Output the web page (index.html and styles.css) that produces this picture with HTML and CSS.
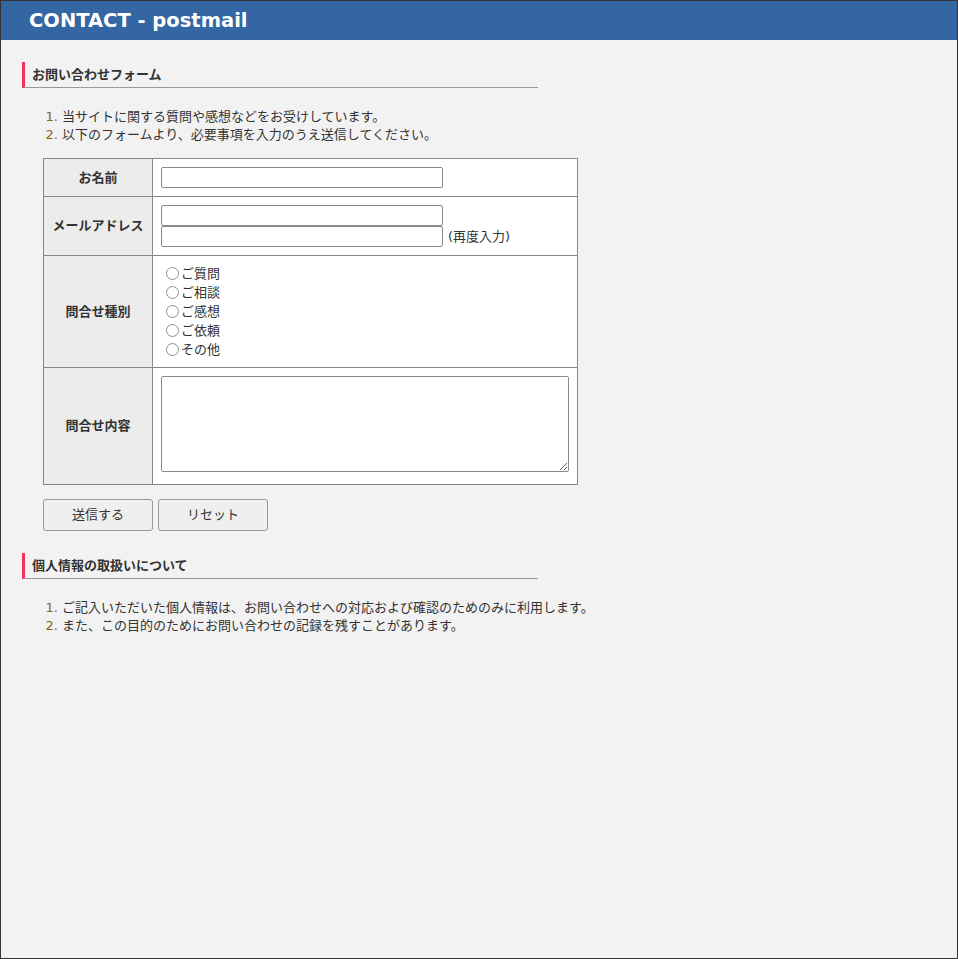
FILE: index.html
```html
<!DOCTYPE html>
<html lang="ja">
<head>
  <meta charset="UTF-8" />
  <title>CONTACT - postmail</title>
  <link rel="stylesheet" href="styles.css">
</head>
<body>
  <div class="header">
    <h1>CONTACT - postmail</h1>
  </div>

  <div class="content">
    <h2 class="heading">お問い合わせフォーム</h2>
    <ol class="notes">
      <li>当サイトに関する質問や感想などをお受けしています。</li>
      <li>以下のフォームより、必要事項を入力のうえ送信してください。</li>
    </ol>

    <form class="mail-form" action="#" method="post">
      <table class="form-table">
        <tr>
          <th>お名前</th>
          <td><input type="text" name="name" class="text-field"></td>
        </tr>
        <tr>
          <th>メールアドレス</th>
          <td>
            <input type="text" name="email" class="text-field block-field">
            <div class="field-row">
              <input type="text" name="email2" class="text-field">
              <span class="hint">(再度入力)</span>
            </div>
          </td>
        </tr>
        <tr>
          <th>問合せ種別</th>
          <td class="radio-cell">
            <label class="radio-item"><input type="radio" name="kind" value="1">ご質問</label>
            <label class="radio-item"><input type="radio" name="kind" value="2">ご相談</label>
            <label class="radio-item"><input type="radio" name="kind" value="3">ご感想</label>
            <label class="radio-item"><input type="radio" name="kind" value="4">ご依頼</label>
            <label class="radio-item"><input type="radio" name="kind" value="5">その他</label>
          </td>
        </tr>
        <tr>
          <th>問合せ内容</th>
          <td class="memo-cell"><textarea name="memo" class="memo"></textarea></td>
        </tr>
      </table>

      <div class="buttons">
        <button type="submit" class="btn">送信する</button>
        <button type="reset" class="btn">リセット</button>
      </div>
    </form>

    <h2 class="heading">個人情報の取扱いについて</h2>
    <ol class="notes">
      <li>ご記入いただいた個人情報は、お問い合わせへの対応および確認のためのみに利用します。</li>
      <li>また、この目的のためにお問い合わせの記録を残すことがあります。</li>
    </ol>
  </div>
</body>
</html>
```

FILE: styles.css
```css
* {
  box-sizing: border-box;
}

html {
  height: 100%;
}

body {
  margin: 0;
  min-height: 100%;
  border: 1px solid #333;
  background: #f2f2f2;
  color: #333;
  font-family: "DejaVu Sans", "Noto Sans CJK JP", sans-serif;
  font-size: 13px;
  line-height: 18px;
}

.header {
  height: 39px;
  background: #3366a2;
  padding: 0 28px;
  display: flex;
  align-items: center;
}

.header h1 {
  margin: 0;
  color: #fff;
  font-size: 19.5px;
  font-weight: bold;
  line-height: 24px;
}

.content {
  padding: 0 21px;
}

.heading {
  width: 516px;
  margin: 22px 0 20px;
  padding: 4px 0 4px 7px;
  border-left: 3px solid #f2325c;
  border-bottom: 1px solid #999;
  font-size: 13px;
  line-height: 17px;
  font-weight: bold;
}

.notes {
  margin: 0 0 14px;
  padding-left: 40px;
}

.notes li::marker {
  color: #8a6418;
}

.mail-form {
  margin-left: 21px;
}

.form-table {
  width: 535px;
  border-collapse: collapse;
  background: #fff;
}

.form-table th,
.form-table td {
  border: 1px solid #888;
  padding: 8px;
}

.form-table th {
  width: 109px;
  background: #ececec;
  font-weight: bold;
  text-align: center;
  vertical-align: middle;
}

.text-field {
  width: 282px;
  height: 21px;
  margin: 0;
  padding: 1px 3px;
  border: 1px solid #8a8a8a;
  border-radius: 2px;
  background: #fff;
  font: inherit;
  vertical-align: top;
}

.block-field {
  display: block;
}

.field-row {
  display: flex;
  align-items: center;
  gap: 5px;
  height: 21px;
}

.radio-cell {
  padding: 8px;
}

.radio-item {
  display: flex;
  align-items: center;
  height: 19px;
}

.radio-item input {
  appearance: none;
  width: 13px;
  height: 13px;
  margin: 0 2px 0 5px;
  border: 1px solid #8f8f8f;
  border-radius: 50%;
  background: #fff;
}

.form-table .memo-cell {
  padding: 8px 8px 12px;
}

.memo {
  display: block;
  width: 100%;
  height: 96px;
  margin: 0;
  border: 1px solid #8a8a8a;
  border-radius: 2px;
  font: inherit;
  resize: both;
}

.buttons {
  display: flex;
  gap: 5px;
  margin-top: 14px;
}

.btn {
  width: 110px;
  height: 32px;
  margin: 0;
  border: 1px solid #999;
  border-radius: 3px;
  background: #efefef;
  color: #333;
  font: inherit;
}
```
